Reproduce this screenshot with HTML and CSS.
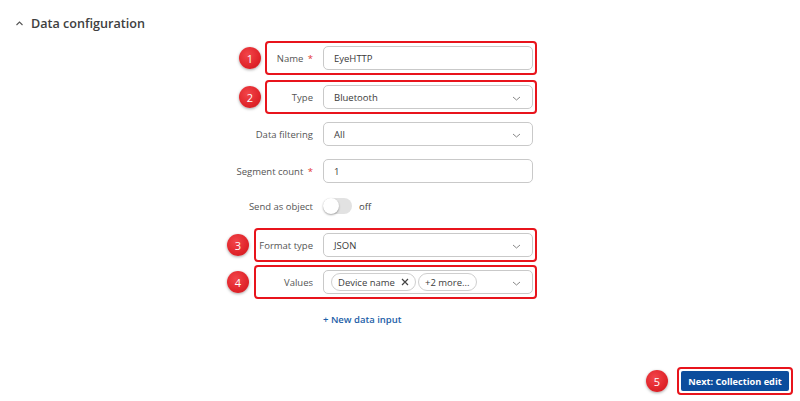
FILE: index.html
```html
<!DOCTYPE html>
<html lang="en">
<head>
<meta charset="utf-8">
<title>Data configuration</title>
<link rel="stylesheet" href="styles.css">
</head>
<body>
<div class="page">
  <header class="section-head">
    <svg class="chev-up" width="9" height="6" viewBox="0 0 9 6"><path d="M1.5 5 L4.5 2 L7.5 5" fill="none" stroke="#555" stroke-width="1.1"/></svg>
    <h2 class="section-title">Data configuration</h2>
  </header>

  <div class="form">
    <div class="row row-name">
      <span class="mark mark-a"></span><span class="badge badge-a">1</span>
      <label class="label">Name <span class="req">*</span></label>
      <div class="field"><span class="value">EyeHTTP</span></div>
    </div>
    <div class="row row-type">
      <span class="mark mark-a"></span><span class="badge badge-a">2</span>
      <label class="label">Type</label>
      <div class="field select"><span class="value">Bluetooth</span>
        <svg class="chev" width="9" height="5" viewBox="0 0 9 5"><path d="M1 1 L4.5 4 L8 1" fill="none" stroke="#888" stroke-width="1"/></svg></div>
    </div>
    <div class="row row-filter">
      <label class="label">Data filtering</label>
      <div class="field select"><span class="value">All</span>
        <svg class="chev" width="9" height="5" viewBox="0 0 9 5"><path d="M1 1 L4.5 4 L8 1" fill="none" stroke="#888" stroke-width="1"/></svg></div>
    </div>
    <div class="row row-seg">
      <label class="label">Segment count <span class="req">*</span></label>
      <div class="field"><span class="value">1</span></div>
    </div>
    <div class="row row-send">
      <label class="label">Send as object</label>
      <div class="toggle-wrap"><span class="toggle"><span class="knob"></span></span><span class="toggle-text">off</span></div>
    </div>
    <div class="row row-format">
      <span class="mark mark-b"></span><span class="badge badge-b">3</span>
      <label class="label">Format type</label>
      <div class="field select"><span class="value">JSON</span>
        <svg class="chev" width="9" height="5" viewBox="0 0 9 5"><path d="M1 1 L4.5 4 L8 1" fill="none" stroke="#888" stroke-width="1"/></svg></div>
    </div>
    <div class="row row-values">
      <span class="mark mark-b"></span><span class="badge badge-b">4</span>
      <label class="label">Values</label>
      <div class="field select chips">
        <span class="chip">Device name <svg class="x" width="8" height="8" viewBox="0 0 8 8"><path d="M1 1 L7 7 M7 1 L1 7" stroke="#444" stroke-width="1.2"/></svg></span>
        <span class="chip">+2 more...</span>
        <svg class="chev" width="9" height="5" viewBox="0 0 9 5"><path d="M1 1 L4.5 4 L8 1" fill="none" stroke="#888" stroke-width="1"/></svg>
      </div>
    </div>
    <div class="row row-link">
      <span class="label"></span>
      <a class="add-link" href="#">+ New data input</a>
    </div>
  </div>

  <footer class="actions">
    <span class="badge badge-static">5</span>
    <span class="btn-mark"><button class="btn" type="button">Next: Collection edit</button></span>
  </footer>
</div>
</body>
</html>
```

FILE: styles.css
```css
* { box-sizing: border-box; }
html, body { margin: 0; padding: 0; background: #fff; }
body {
  font-family: "Open Sans", "Noto Sans", sans-serif;
  color: #444;
  width: 800px;
  height: 401px;
  overflow: hidden;
}
.page {
  height: 401px;
  display: flex;
  flex-direction: column;
}
.section-head {
  display: flex;
  align-items: center;
  gap: 7px;
  padding: 14px 0 0 15px;
  height: 32px;
}
.chev-up { display: block; }
.section-title {
  margin: 0;
  font-size: 12.6px;
  font-weight: 600;
  color: #404040;
}
.form {
  margin-left: 203px;
  width: 330px;
  padding-top: 14px;
  display: flex;
  flex-direction: column;
}
.row {
  position: relative;
  display: flex;
  align-items: center;
  height: 24px;
  gap: 10px;
}
.row-type { margin-top: 15px; }
.row-filter { margin-top: 13px; }
.row-seg { margin-top: 13px; }
.row-send { margin-top: 11px; }
.row-format { margin-top: 15px; }
.row-values { margin-top: 13px; }
.row-link { margin-top: 13px; }
.label {
  width: 110px;
  flex: none;
  text-align: right;
  font-size: 9.5px;
  color: #555;
  position: relative;
  z-index: 1;
}
.req { color: #e3342f; margin-left: 2px; }
.field {
  position: relative;
  z-index: 1;
  flex: 1;
  height: 24px;
  border: 1px solid #c9c9c9;
  border-radius: 5px;
  background: #fff;
  display: flex;
  align-items: center;
  padding: 0 10px;
  font-size: 9.5px;
  color: #3a3a3a;
}
.select .value { flex: 1; }
.chev { position: absolute; right: 11px; top: 10px; }
.chips { gap: 2px; padding-left: 7px; }
.chip {
  display: inline-flex;
  align-items: center;
  gap: 6px;
  height: 18px;
  padding: 0 6px;
  border: 1px solid #cfcfcf;
  border-radius: 9px;
  font-size: 9.5px;
  color: #404040;
}
.chip .x { display: block; }
.toggle-wrap {
  display: flex;
  align-items: center;
  gap: 7px;
  position: relative;
  z-index: 1;
}
.toggle {
  width: 29px;
  height: 16px;
  border-radius: 8px;
  background: #e2e2e2;
  position: relative;
  display: block;
}
.knob {
  position: absolute;
  left: 0;
  top: 0;
  width: 16px;
  height: 16px;
  border-radius: 50%;
  background: #fff;
  box-shadow: 0 1px 2px rgba(0,0,0,0.35);
}
.toggle-text { font-size: 9.5px; color: #444; }
.add-link {
  font-size: 9.5px;
  font-weight: 600;
  color: #1d5fa8;
  text-decoration: none;
  position: relative;
  z-index: 1;
}
.mark {
  position: absolute;
  top: -5px;
  bottom: -5px;
  right: -4px;
  border: 2px solid #e8141c;
  border-radius: 4px;
  z-index: 0;
}
.mark-a { left: 62px; }
.mark-b { left: 51px; }
.badge {
  width: 22px;
  height: 22px;
  border-radius: 50%;
  background: radial-gradient(circle at 40% 35%, #f2454a 0%, #e0252b 60%, #c8161c 100%);
  box-shadow: 0 1px 3px rgba(0,0,0,0.35);
  color: #fff;
  font-size: 11px;
  font-weight: 400;
  display: flex;
  align-items: center;
  justify-content: center;
  flex: none;
}
.row .badge { position: absolute; top: 1px; z-index: 2; }
.badge-a { left: 36px; }
.badge-b { left: 24px; }
.actions {
  margin-top: auto;
  display: flex;
  align-items: center;
  justify-content: flex-end;
  gap: 9px;
  padding: 0 7px 6px 0;
}
.btn-mark {
  display: block;
  padding: 2px;
  border: 2px solid #e8141c;
  border-radius: 4px;
}
.btn {
  display: block;
  height: 20px;
  width: 108px;
  padding: 0;
  border: none;
  border-radius: 2px;
  background: #0c4d9d;
  color: #fff;
  font-family: "Open Sans", "Noto Sans", sans-serif;
  font-size: 9.2px;
  font-weight: 700;
}
```
